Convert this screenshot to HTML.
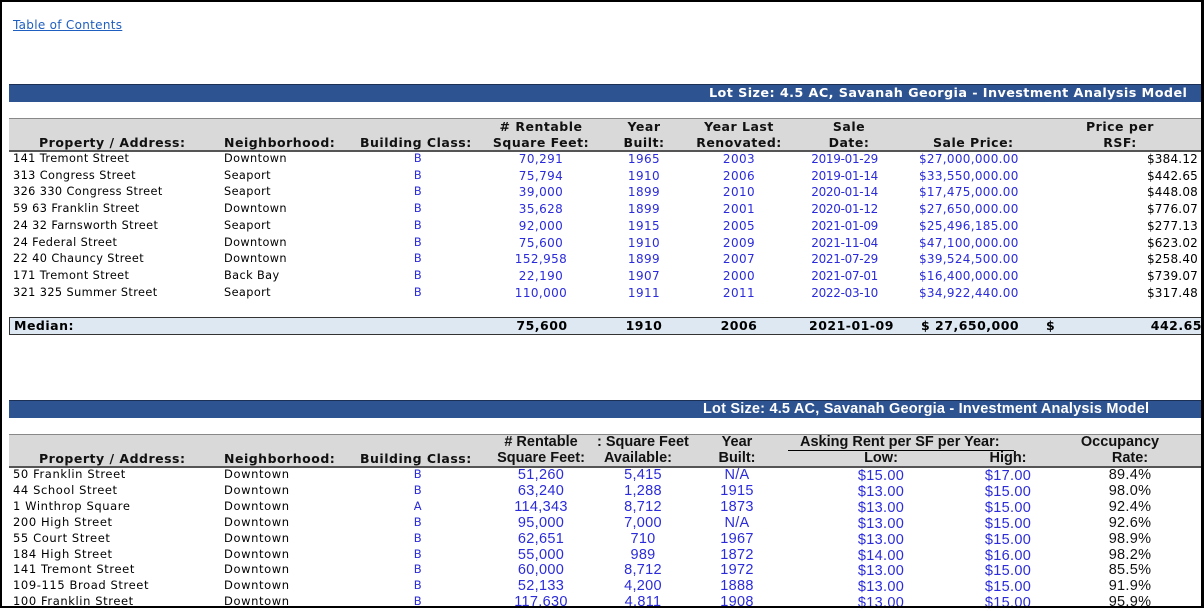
<!DOCTYPE html>
<html><head><meta charset="utf-8"><style>
*{margin:0;padding:0;box-sizing:border-box}
body{width:1204px;height:608px;overflow:hidden;background:#fff;position:relative;font-family:"DejaVu Sans",Verdana,sans-serif;}
.frame{position:absolute;left:0;top:0;width:1204px;height:608px;border:2px solid #000;border-right-width:3px;z-index:10;pointer-events:none}
.a{position:absolute;white-space:nowrap}
.toc{left:13px;top:18px;font-size:12px;color:#1f5fbf;text-decoration:underline;letter-spacing:0.3px}
.bar{position:absolute;left:9px;width:1195px;height:18px;background:#2e5391;border-top:1px solid #1c2f55;overflow:hidden}
.bar span{position:absolute;left:0;top:1px;color:#fff;font-weight:bold;white-space:nowrap}
.hdr{position:absolute;left:9px;width:1195px;background:#d9d9d9;border-top:1px solid #888;border-bottom:2px solid #555}
.h{position:absolute;font-weight:bold;white-space:nowrap;color:#111;font-size:12.5px;letter-spacing:0.5px}
.r{position:absolute;left:0;width:1204px;height:16px}
.r span{position:absolute;white-space:nowrap}
.t1 .r{font-size:11.3px;letter-spacing:0.4px}
.bl{color:#2b2bdc}
.cl{text-align:center;width:120px}
.rt{text-align:right;width:140px}
.med{position:absolute;left:9px;top:317px;width:1195px;height:18px;background:#dde8f3;border:1px solid #333;font-weight:bold;font-size:12.5px;letter-spacing:0.5px}
.med span{position:absolute;top:0;white-space:nowrap}
.t2 .r{font-size:11.5px;letter-spacing:0.6px}
.t2 .n{font-family:"Liberation Sans",Arial,sans-serif;font-size:14.5px;letter-spacing:0.3px}
.t2 .h2{font-family:"Liberation Sans",Arial,sans-serif;font-size:14.5px;font-weight:bold;position:absolute;white-space:nowrap;color:#111}
</style></head><body>
<div class="frame"></div>
<div class="a toc">Table of Contents</div>

<div class="bar" style="top:84px"><span style="left:700px;font-size:12.8px;letter-spacing:0.4px">Lot Size: 4.5 AC, Savanah Georgia - Investment Analysis Model</span></div>

<div class="t1">
<div class="hdr" style="top:118px;height:34px"></div>
<div class="h" style="left:39px;top:135px">Property / Address:</div>
<div class="h" style="left:224px;top:135px">Neighborhood:</div>
<div class="h" style="left:360px;top:135px">Building Class:</div>
<div class="h cl" style="left:481px;top:119px">#&nbsp;Rentable</div>
<div class="h cl" style="left:481px;top:135px">Square Feet:</div>
<div class="h cl" style="left:584px;top:119px">Year</div>
<div class="h cl" style="left:584px;top:135px">Built:</div>
<div class="h cl" style="left:679px;top:119px">Year Last</div>
<div class="h cl" style="left:679px;top:135px">Renovated:</div>
<div class="h cl" style="left:789px;top:119px">Sale</div>
<div class="h cl" style="left:789px;top:135px">Date:</div>
<div class="h" style="left:933px;top:135px">Sale Price:</div>
<div class="h cl" style="left:1060px;top:119px">Price per</div>
<div class="h cl" style="left:1060px;top:135px">RSF:</div>

<div id="rows1"></div>
<div class="med">
<span style="left:4px">Median:</span>
<span style="left:482px;width:100px;text-align:center">75,600</span>
<span style="left:584px;width:100px;text-align:center">1910</span>
<span style="left:679px;width:100px;text-align:center">2006</span>
<span style="left:799px">2021-01-09</span>
<span style="left:911px">$ 27,650,000</span>
<span style="left:1036px">$</span>
<span style="left:1090px;width:102px;text-align:right">442.65</span>
</div>
</div>

<div class="bar" style="top:400px"><span style="left:694px;font-family:'Liberation Sans',Arial,sans-serif;font-size:14.5px;top:0;letter-spacing:0.2px">Lot Size: 4.5 AC, Savanah Georgia - Investment Analysis Model</span></div>

<div class="t2">
<div class="hdr" style="top:434px;height:34px"></div>
<div class="h" style="left:39px;top:451px">Property / Address:</div>
<div class="h" style="left:224px;top:451px">Neighborhood:</div>
<div class="h" style="left:360px;top:451px">Building Class:</div>
<div class="h2 cl" style="left:481px;top:434px"># Rentable</div>
<div class="h2 cl" style="left:481px;top:450px">Square Feet:</div>
<div class="h2" style="left:597px;top:434px;width:92px;overflow:hidden">:&nbsp;Square Feet</div>
<div class="h2" style="left:604px;top:450px">Available:</div>
<div class="h2 cl" style="left:677px;top:434px">Year</div>
<div class="h2 cl" style="left:677px;top:450px">Built:</div>
<div class="h2" style="left:800px;top:434px">Asking Rent per SF per Year:</div>
<div style="position:absolute;left:788px;top:450px;width:226px;height:1px;background:#000"></div>
<div class="h2 cl" style="left:821px;top:450px">Low:</div>
<div class="h2 cl" style="left:948px;top:450px">High:</div>
<div class="h2 cl" style="left:1060px;top:434px">Occupancy</div>
<div class="h2 cl" style="left:1070px;top:450px">Rate:</div>
<div id="rows2"></div>
</div>

<script>
var d1=[["141 Tremont Street","Downtown","70,291","1965","2003","2019-01-29","$27,000,000.00","$384.12"],
["313 Congress Street","Seaport","75,794","1910","2006","2019-01-14","$33,550,000.00","$442.65"],
["326 330 Congress Street","Seaport","39,000","1899","2010","2020-01-14","$17,475,000.00","$448.08"],
["59 63 Franklin Street","Downtown","35,628","1899","2001","2020-01-12","$27,650,000.00","$776.07"],
["24 32 Farnsworth Street","Seaport","92,000","1915","2005","2021-01-09","$25,496,185.00","$277.13"],
["24 Federal Street","Downtown","75,600","1910","2009","2021-11-04","$47,100,000.00","$623.02"],
["22 40 Chauncy Street","Downtown","152,958","1899","2007","2021-07-29","$39,524,500.00","$258.40"],
["171 Tremont Street","Back Bay","22,190","1907","2000","2021-07-01","$16,400,000.00","$739.07"],
["321 325 Summer Street","Seaport","110,000","1911","2011","2022-03-10","$34,922,440.00","$317.48"]];
var h="";
d1.forEach(function(r,i){var t=152+i*16.7;
h+='<div class="r" style="top:'+t+'px"><span style="left:13px">'+r[0]+'</span><span style="left:224px">'+r[1]+'</span>'+
'<span class="bl cl" style="left:358px">B</span><span class="bl cl" style="left:481px;font-size:12px">'+r[2]+'</span>'+
'<span class="bl cl" style="left:584px;font-size:12px">'+r[3]+'</span><span class="bl cl" style="left:679px;font-size:12px">'+r[4]+'</span>'+
'<span class="bl rt" style="left:738px;font-size:12px;letter-spacing:-0.3px">'+r[5]+'</span><span class="bl" style="left:919px;font-size:12px;letter-spacing:0.3px">'+r[6]+'</span>'+
'<span class="rt" style="left:1058px;font-size:12px;letter-spacing:0.2px">'+r[7]+'</span></div>';});
document.getElementById("rows1").innerHTML=h;
var d2=[["50 Franklin Street","B","51,260","5,415","N/A","$15.00","$17.00","89.4%"],
["44 School Street","B","63,240","1,288","1915","$13.00","$15.00","98.0%"],
["1 Winthrop Square","A","114,343","8,712","1873","$13.00","$15.00","92.4%"],
["200 High Street","B","95,000","7,000","N/A","$13.00","$15.00","92.6%"],
["55 Court Street","B","62,651","710","1967","$13.00","$15.00","98.9%"],
["184 High Street","B","55,000","989","1872","$14.00","$16.00","98.2%"],
["141 Tremont Street","B","60,000","8,712","1972","$13.00","$15.00","85.5%"],
["109-115 Broad Street","B","52,133","4,200","1888","$13.00","$15.00","91.9%"],
["100 Franklin Street","B","117,630","4,811","1908","$13.00","$15.00","95.9%"]];
h="";
d2.forEach(function(r,i){var t=467+i*15.9;
h+='<div class="r" style="top:'+t+'px"><span style="left:13px">'+r[0]+'</span><span style="left:224px">Downtown</span>'+
'<span class="bl cl" style="left:358px">'+r[1]+'</span><span class="bl cl n" style="left:481px">'+r[2]+'</span>'+
'<span class="bl cl n" style="left:583px">'+r[3]+'</span><span class="bl cl n" style="left:677px">'+r[4]+'</span>'+
'<span class="bl cl n" style="left:821px;top:1px">'+r[5]+'</span><span class="bl cl n" style="left:948px;top:1px">'+r[6]+'</span>'+
'<span class="cl n" style="left:1070px;color:#111">'+r[7]+'</span></div>';});
document.getElementById("rows2").innerHTML=h;
</script>
</body></html>
